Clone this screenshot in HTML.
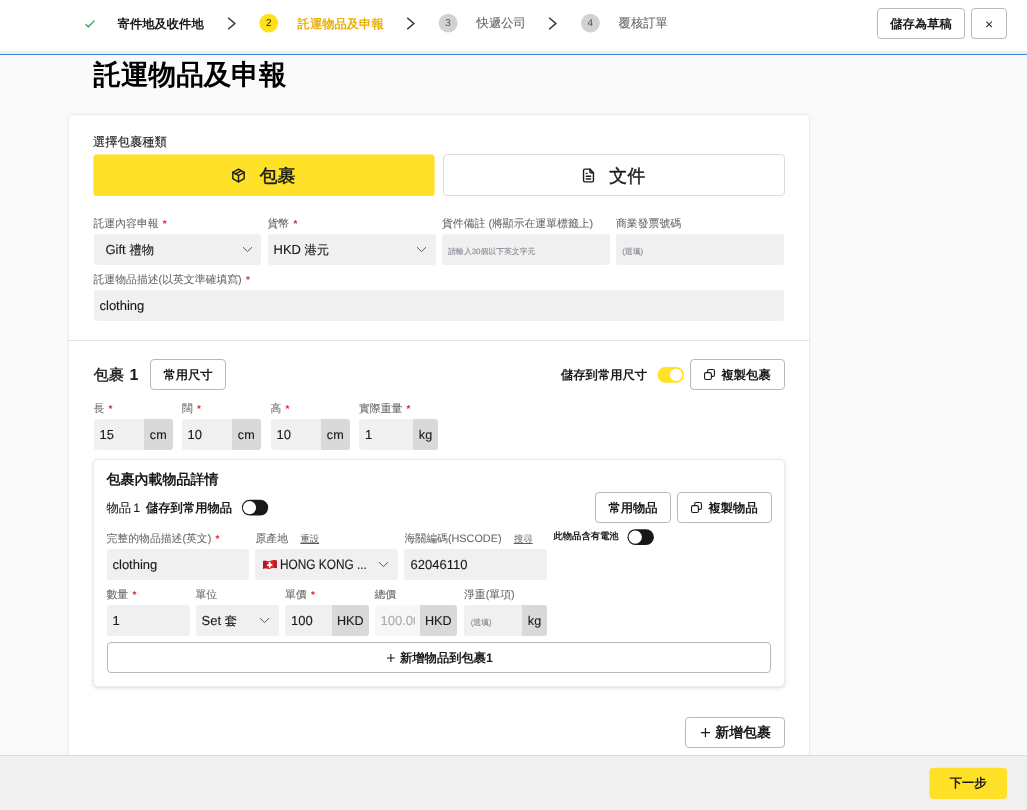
<!DOCTYPE html>
<html>
<head>
<meta charset="utf-8">
<title>託運物品及申報</title>
<style>
*{box-sizing:border-box;margin:0;padding:0}
html,body{width:1027px;height:810px;overflow:hidden}
body{font-family:"Liberation Sans",sans-serif;background:#fafafa;color:#1a1a1a;position:relative;font-size:13px;-webkit-font-smoothing:antialiased;text-rendering:geometricPrecision}
#root{position:absolute;left:0;top:0;width:1027px;height:810px;will-change:transform}
.abs{position:absolute}
svg{position:absolute;overflow:visible}
#hdr{position:absolute;left:0;top:0;width:1027px;height:51px;background:#fff}
.t{position:absolute;white-space:nowrap;line-height:1}
.b{font-weight:bold}
.m{font-weight:400;-webkit-text-stroke:0.45px currentColor}
.btn{position:absolute;background:#fff;border:1px solid #b8b8b8;border-radius:4px;font-weight:bold;font-size:12.3px;white-space:nowrap;color:#1a1a1a}
.pl{font-weight:normal;font-size:15px}
.circ{position:absolute;width:18px;height:18px;border-radius:50%;text-align:center;line-height:18px;font-size:10px}
.lbl{-webkit-text-stroke:0.06px currentColor}
.r,.inp .v,.inp .u,.inp .ph{-webkit-text-stroke:0.12px currentColor}
.lbl{position:absolute;white-space:nowrap;font-size:10.85px;color:#666;line-height:1}
.lbl i{font-style:normal;color:#e02020;margin-left:4.2px;font-weight:bold;font-size:10px;-webkit-text-stroke:0}
.lbl u{margin-left:12.4px;color:#5c5c5c;font-size:9.4px;text-underline-offset:1px;-webkit-text-stroke:0}
.inp{position:absolute;background:#f0f0f0;border-radius:3px;height:31px;overflow:hidden}
.inp .v s{text-decoration:none;font-size:12.3px}
.inp .v{position:absolute;left:6px;top:0;line-height:31px;font-size:13px;white-space:nowrap;color:#1a1a1a}
.inp .u{position:absolute;right:0;top:0;background:#d9d9d9;height:31px;line-height:33px;text-align:center;font-size:12.6px;color:#1a1a1a}
.inp .ph{position:absolute;left:6.2px;top:0;line-height:35px;font-size:7.85px;color:#8b8c96;white-space:nowrap}
#card{position:absolute;left:68px;top:114px;width:742px;height:700px;background:#fff;border:1px solid #ebebeb;border-radius:5px;box-shadow:0 0 5px rgba(0,0,0,.035)}
#div1{position:absolute;left:69px;top:340px;width:740px;height:1px;background:#e4e4e4}
#inner{position:absolute;left:93px;top:459px;width:692px;height:228px;background:#fff;border:1px solid #ebebeb;border-radius:5px;box-shadow:0 1px 5px rgba(0,0,0,.11),0 1px 2px rgba(0,0,0,.05)}
#ftr{position:absolute;left:0;top:755px;width:1027px;height:55px;background:#f0f0f0;border-top:1px solid #dadada}
.tog{position:absolute;width:26px;height:15px;border-radius:7.5px}
.tog b{position:absolute;top:2px;width:11px;height:11px;border-radius:50%;background:#fff}
</style>
</head>
<body>
<div id="root">
<div id="hdr"></div>
<div class="abs" style="left:0;top:51px;width:1027px;height:3px;background:#efefef"></div>
<div class="abs" style="left:0;top:54px;width:1027px;height:1px;background:#3f82dc"></div>
<svg style="left:84px;top:18px" width="12" height="12" viewBox="0 0 12 12"><path d="M1.5 6.2 L4.3 8.8 L10.5 2.6" fill="none" stroke="#27a55a" stroke-width="1.3"/></svg>
<div class="t b" style="left:117.6px;top:17.5px;font-size:12.3px">寄件地及收件地</div>
<svg style="left:226px;top:16px" width="12" height="15" viewBox="0 0 12 15"><path d="M2.2 1.8 L8.8 7.5 L2.2 13.2" fill="none" stroke="#333" stroke-width="1.5"/></svg>
<svg style="left:0;top:0" width="1" height="1"><circle cx="268.8" cy="23.2" r="9.35" fill="#ffe01b"/></svg>
<div class="t" style="left:258.8px;top:19.3px;width:20px;text-align:center;font-size:10px;color:#222">2</div>
<div class="t b" style="left:297.6px;top:17.5px;font-size:12.3px;color:#e9b10c">託運物品及申報</div>
<svg style="left:405px;top:16px" width="12" height="15" viewBox="0 0 12 15"><path d="M2.2 1.8 L8.8 7.5 L2.2 13.2" fill="none" stroke="#333" stroke-width="1.5"/></svg>
<svg style="left:0;top:0" width="1" height="1"><circle cx="448.1" cy="23.2" r="9.35" fill="#d2d2d2"/></svg>
<div class="t" style="left:438.1px;top:19.3px;width:20px;text-align:center;font-size:10px;color:#555">3</div>
<div class="t r" style="left:476.6px;top:17px;font-size:12.3px;color:#666">快遞公司</div>
<svg style="left:547px;top:16px" width="12" height="15" viewBox="0 0 12 15"><path d="M2.2 1.8 L8.8 7.5 L2.2 13.2" fill="none" stroke="#333" stroke-width="1.5"/></svg>
<svg style="left:0;top:0" width="1" height="1"><circle cx="590.4" cy="23.2" r="9.35" fill="#d2d2d2"/></svg>
<div class="t" style="left:580.4px;top:19.3px;width:20px;text-align:center;font-size:10px;color:#555">4</div>
<div class="t r" style="left:618.6px;top:17px;font-size:12.3px;color:#666">覆核訂單</div>
<div class="btn" style="left:877px;top:8px;width:88px;height:31px;text-align:center;line-height:30.5px">儲存為草稿</div>
<div class="btn" style="left:971px;top:8px;width:36px;height:31px;text-align:center;line-height:30.5px;font-weight:normal;font-size:14px">×</div>
<div class="t b" style="left:93.4px;top:61px;font-size:27.6px;color:#000">託運物品及申報</div>
<div id="card"></div>
<div class="t r" style="left:93px;top:136px;font-size:12.3px">選擇包裹種類</div>
<svg style="left:0;top:0" width="1" height="1"><rect x="93.4" y="154.4" width="341.2" height="41.7" rx="3.4" fill="#ffe227"/></svg>
<div class="abs" style="left:443px;top:154px;width:342px;height:42px;background:#fff;border:1px solid #dcdcdc;border-radius:4px"></div>
<svg style="left:230px;top:166.7px" width="17" height="17" viewBox="0 0 24 24" fill="none" stroke="#1a1a1a" stroke-width="2" stroke-linecap="round" stroke-linejoin="round"><path d="M12 3l8 4.5l0 9l-8 4.5l-8 -4.5l0 -9l8 -4.5"/><path d="M12 12l8 -4.5"/><path d="M12 12l0 9"/><path d="M12 12l-8 -4.5"/><path d="M16 5.25l-8 4.5"/></svg>
<div class="t m" style="left:259.6px;top:167px;font-size:18px">包裹</div>
<svg style="left:579.7px;top:166.7px" width="17" height="17" viewBox="0 0 24 24" fill="none" stroke="#1a1a1a" stroke-width="2" stroke-linecap="round" stroke-linejoin="round"><path d="M14 3v4a1 1 0 0 0 1 1h4"/><path d="M17 21h-10a2 2 0 0 1 -2 -2v-14a2 2 0 0 1 2 -2h7l5 5v11a2 2 0 0 1 -2 2z"/><path d="M9 9l1 0"/><path d="M9 13l6 0"/><path d="M9 17l6 0"/></svg>
<div class="t m" style="left:609.2px;top:167px;font-size:18px">文件</div>
<div class="lbl" style="left:93.5px;top:219px">託運內容申報<i>*</i></div>
<div class="lbl" style="left:267.5px;top:219px">貨幣<i>*</i></div>
<div class="lbl" style="left:442px;top:219px">貨件備註 (將顯示在運單標籤上)</div>
<div class="lbl" style="left:616px;top:219px">商業發票號碼</div>
<div class="inp" style="left:93.5px;top:234px;width:167.5px"><span class="v" style="left:12px">Gift <s>禮物</s></span></div>
<svg style="left:241.5px;top:246px" width="11" height="7" viewBox="0 0 11 7"><path d="M1 1.2 L5.5 5.6 L10 1.2" fill="none" stroke="#5a5a5a" stroke-width="1"/></svg>
<div class="inp" style="left:267.5px;top:234px;width:168px"><span class="v">HKD <s>港元</s></span></div>
<svg style="left:416px;top:246px" width="11" height="7" viewBox="0 0 11 7"><path d="M1 1.2 L5.5 5.6 L10 1.2" fill="none" stroke="#5a5a5a" stroke-width="1"/></svg>
<div class="inp" style="left:442px;top:234px;width:167.5px"><span class="ph">請輸入30個以下英文字元</span></div>
<div class="inp" style="left:616px;top:234px;width:168px"><span class="ph">(選填)</span></div>
<div class="lbl" style="left:93.5px;top:274.5px">託運物品描述(以英文準確填寫)<i>*</i></div>
<div class="inp" style="left:93.5px;top:290px;width:690.6px"><span class="v">clothing</span></div>
<div id="div1"></div>
<div class="t" style="left:93.5px;top:368px;font-size:16px"><span class="m" style="font-size:15.2px;-webkit-text-stroke-width:.35px">包裹</span> <b style="margin-left:1.2px">1</b></div>
<div class="btn" style="left:150px;top:359px;width:76px;height:31px;text-align:center;line-height:30.5px">常用尺寸</div>
<div class="t b" style="left:561px;top:369px;font-size:12.3px">儲存到常用尺寸</div>
<svg style="left:0;top:0" width="1" height="1"><rect x="657.6" y="366.9" width="26.5" height="15.9" rx="7.95" fill="#ffe227"/><circle cx="676.05" cy="374.9" r="6.2" fill="#fff"/></svg>
<div class="btn" style="left:690px;top:359px;width:95px;height:31px;line-height:30.5px;padding-left:30.5px">複製包裹</div>
<svg style="left:703.6px;top:369.2px" width="11" height="11" viewBox="0 0 11 11" fill="none" stroke="#1a1a1a" stroke-width="1.1" stroke-linejoin="round"><rect x="0.55" y="3.65" width="6.8" height="6.8" rx="1.4"/><path d="M3.65 3.6V1.95a1.4 1.4 0 0 1 1.4-1.4h4a1.4 1.4 0 0 1 1.4 1.4v4a1.4 1.4 0 0 1-1.4 1.4H7.4"/></svg>
<div class="lbl" style="left:93.5px;top:403.5px">長<i>*</i></div>
<div class="lbl" style="left:182px;top:403.5px">闊<i>*</i></div>
<div class="lbl" style="left:270.5px;top:403.5px">高<i>*</i></div>
<div class="lbl" style="left:359px;top:403.5px">實際重量<i>*</i></div>
<div class="inp" style="left:93.5px;top:418.5px;width:79px"><span class="v">15</span><span class="u" style="width:28.5px">cm</span></div>
<div class="inp" style="left:181.5px;top:418.5px;width:79px"><span class="v">10</span><span class="u" style="width:28.5px">cm</span></div>
<div class="inp" style="left:270.5px;top:418.5px;width:79px"><span class="v">10</span><span class="u" style="width:28.5px">cm</span></div>
<div class="inp" style="left:359px;top:418.5px;width:79px"><span class="v">1</span><span class="u" style="width:25px">kg</span></div>
<div id="inner"></div>
<div class="t b" style="left:106.5px;top:472px;font-size:14px">包裹內載物品詳情</div>
<div class="t" style="left:106.5px;top:502px;font-size:12.3px"><span class="r">物品<span style="margin-left:-1.3px"> 1</span></span> <b style="margin-left:2.5px">儲存到常用物品</b></div>
<svg style="left:0;top:0" width="1" height="1"><rect x="241.9" y="499.7" width="26.3" height="15.8" rx="7.9" fill="#181818"/><circle cx="249.5" cy="507.6" r="6.6" fill="#fff"/></svg>
<div class="btn" style="left:595px;top:492px;width:76px;height:31px;text-align:center;line-height:30.5px">常用物品</div>
<div class="btn" style="left:677px;top:492px;width:95px;height:31px;line-height:30.5px;padding-left:30.5px">複製物品</div>
<svg style="left:690.6px;top:502.2px" width="11" height="11" viewBox="0 0 11 11" fill="none" stroke="#1a1a1a" stroke-width="1.1" stroke-linejoin="round"><rect x="0.55" y="3.65" width="6.8" height="6.8" rx="1.4"/><path d="M3.65 3.6V1.95a1.4 1.4 0 0 1 1.4-1.4h4a1.4 1.4 0 0 1 1.4 1.4v4a1.4 1.4 0 0 1-1.4 1.4H7.4"/></svg>
<div class="lbl" style="left:106.5px;top:534px">完整的物品描述(英文)<i>*</i></div>
<div class="lbl" style="left:255.5px;top:534px">原產地<u>重設</u></div>
<div class="lbl" style="left:404.5px;top:534px">海關編碼(HSCODE)<u>搜尋</u></div>
<div class="t b" style="left:553.5px;top:532px;font-size:9.3px">此物品含有電池</div>
<svg style="left:0;top:0" width="1" height="1"><rect x="627.5" y="529.2" width="26.4" height="15.9" rx="7.95" fill="#181818"/><circle cx="635.25" cy="537.15" r="6.6" fill="#fff"/></svg>
<div class="inp" style="left:106.5px;top:548.5px;width:142.5px"><span class="v">clothing</span></div>
<div class="inp" style="left:255px;top:548.5px;width:143px"><span class="v" style="left:25.1px;font-size:13.7px;transform:scaleX(.865);transform-origin:0 50%">HONG KONG ...</span></div>
<svg style="left:262.7px;top:559.9px" width="13.9" height="9.6" viewBox="0 0 14.4 9.8" preserveAspectRatio="none"><path d="M0 1.3 C2.2 -0.2 4.6 1.9 7.2 1.1 C9.6 0.3 11.8 -0.6 14.4 0.7 L14.4 8.5 C11.8 7.2 9.6 8.1 7.2 8.9 C4.6 9.7 2.2 7.6 0 9.1 Z" fill="#d81f2e"/><path d="M0 1.3 C1.2 0.5 2.4 0.6 3.4 0.9 L3.4 8.7 C2.4 8.4 1.2 8.3 0 9.1 Z" fill="#b51525"/><path d="M11.4 0.1 C12.4 -0.1 13.4 0.2 14.4 0.7 L14.4 8.5 C13.4 8 12.4 7.7 11.4 7.9 Z" fill="#c21a29"/><path d="M6.9 1.9 C8.2 2.3 8.4 3.5 8 4.3 C9 3.9 10.1 4.6 10.1 5.7 C9 5.4 8.4 5.8 8 6.3 C8.1 7.4 7.3 8.2 6.3 8.2 C6.7 7.3 6.3 6.6 5.8 6.2 C4.7 6.5 3.8 5.8 3.8 4.7 C4.7 5.1 5.4 4.7 5.8 4.2 C5.4 3.2 5.9 2.2 6.9 1.9 Z" fill="#fff"/></svg>
<svg style="left:377.8px;top:561.3px" width="11" height="7" viewBox="0 0 11 7"><path d="M1 1.2 L5.5 5.6 L10 1.2" fill="none" stroke="#5a5a5a" stroke-width="1"/></svg>
<div class="inp" style="left:404px;top:548.5px;width:143px"><span class="v" style="left:6.6px">62046110</span></div>
<div class="lbl" style="left:106.5px;top:590px">數量<i>*</i></div>
<div class="lbl" style="left:195.5px;top:590px">單位</div>
<div class="lbl" style="left:285px;top:590px">單價<i>*</i></div>
<div class="lbl" style="left:374.5px;top:590px">總價</div>
<div class="lbl" style="left:464px;top:590px">淨重(單項)</div>
<div class="inp" style="left:106.5px;top:605px;width:83px"><span class="v">1</span></div>
<div class="inp" style="left:195.5px;top:605px;width:83.5px"><span class="v">Set <s>套</s></span></div>
<svg style="left:259px;top:616.5px" width="11" height="7" viewBox="0 0 11 7"><path d="M1 1.2 L5.5 5.6 L10 1.2" fill="none" stroke="#5a5a5a" stroke-width="1"/></svg>
<div class="inp" style="left:285px;top:605px;width:84px"><span class="v">100</span><span class="u" style="width:37.5px">HKD</span></div>
<div class="inp" style="left:374.5px;top:605px;width:82.5px;background:#f7f7f7"><span class="v" style="color:#acacac;width:34.3px;overflow:hidden">100.00</span><span class="u" style="width:37.5px">HKD</span></div>
<div class="inp" style="left:463.5px;top:605px;width:83.5px"><span class="ph" style="left:7.2px">(選填)</span><span class="u" style="width:25px">kg</span></div>
<div class="btn" style="left:106.5px;top:642px;width:664.5px;height:31px"></div>
<svg style="left:0;top:0" width="1" height="1"><path d="M387.0 658H394.79999999999995M390.9 654.1V661.9" stroke="#1a1a1a" stroke-width="1.1" fill="none"/></svg>
<div class="t b" style="left:400px;top:651.5px;font-size:12.3px">新增物品到包裹1</div>
<div class="btn" style="left:685px;top:717px;width:100px;height:31px"></div>
<svg style="left:0;top:0" width="1" height="1"><path d="M700.9000000000001 732.65H710.0M705.45 728.1V737.1999999999999" stroke="#1a1a1a" stroke-width="1.2" fill="none"/></svg>
<div class="t b" style="left:715.3px;top:725.5px;font-size:13.9px">新增包裹</div>
<div id="ftr"></div>
<svg style="left:0;top:0" width="1" height="1"><rect x="929.4" y="767.8" width="77.6" height="31.3" rx="4" fill="#ffe227"/></svg>
<div class="t b" style="left:929.4px;top:777px;width:77.6px;text-align:center;font-size:12.3px">下一步</div>
</div>
</body>
</html>
